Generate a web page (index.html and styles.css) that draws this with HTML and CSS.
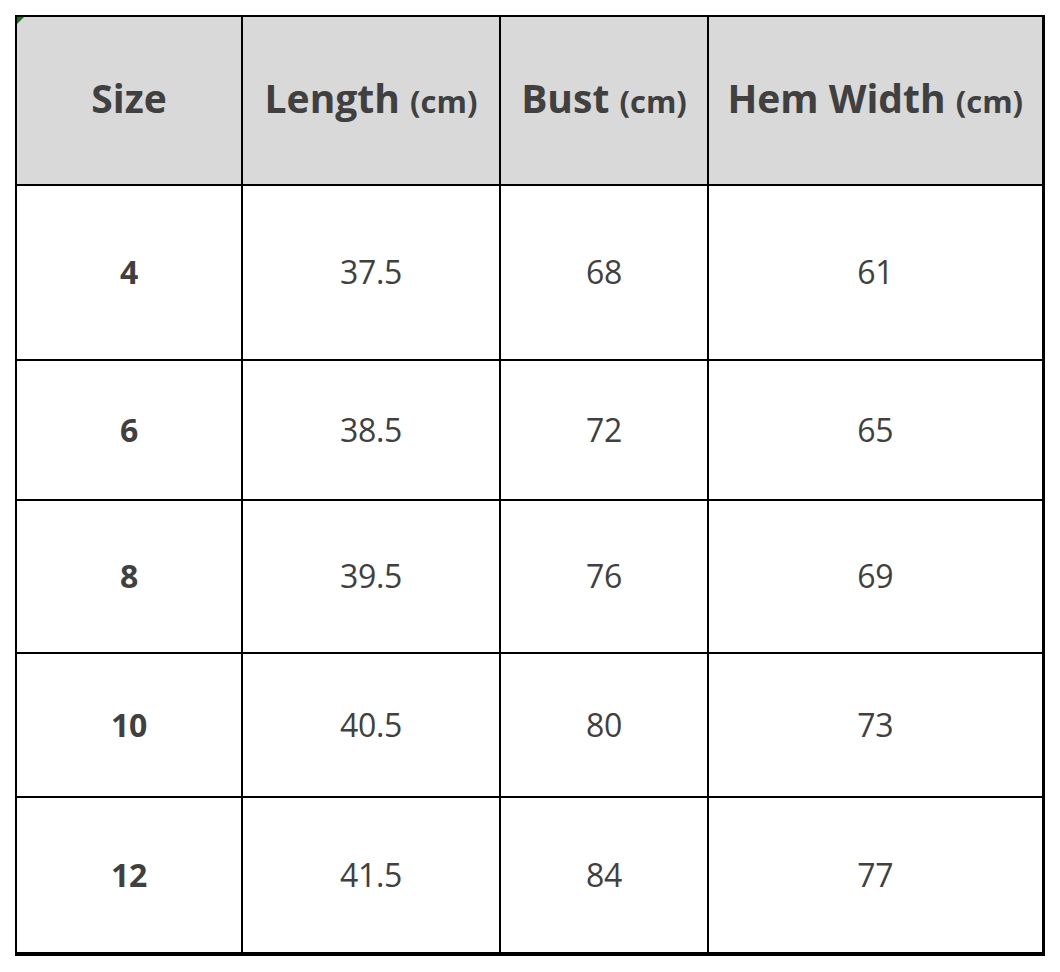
FILE: index.html
```html
<!DOCTYPE html>
<html lang="en">
<head>
<meta charset="utf-8">
<title>Size Chart</title>
<link rel="stylesheet" href="styles.css">
</head>
<body>
<div class="wrap">
  <span class="corner" aria-hidden="true"></span>
  <table class="size-table">
    <colgroup>
      <col class="c1"><col class="c2"><col class="c3"><col class="c4">
    </colgroup>
    <thead>
      <tr class="r0">
        <th>Size</th>
        <th>Length <span class="unit">(cm)</span></th>
        <th>Bust <span class="unit">(cm)</span></th>
        <th>Hem Width <span class="unit">(cm)</span></th>
      </tr>
    </thead>
    <tbody>
      <tr class="r1"><td class="sz">4</td><td>37.5</td><td>68</td><td>61</td></tr>
      <tr class="r2"><td class="sz">6</td><td>38.5</td><td>72</td><td>65</td></tr>
      <tr class="r3"><td class="sz">8</td><td>39.5</td><td>76</td><td>69</td></tr>
      <tr class="r4"><td class="sz">10</td><td>40.5</td><td>80</td><td>73</td></tr>
      <tr class="r5"><td class="sz">12</td><td>41.5</td><td>84</td><td>77</td></tr>
    </tbody>
  </table>
</div>
</body>
</html>
```

FILE: styles.css
```css
html, body {
  margin: 0;
  padding: 0;
  background: #ffffff;
}

.wrap {
  position: relative;
  margin: 15px 0 0 15px;
  width: 1027px;
}

.corner {
  position: absolute;
  left: 2px;
  top: 2px;
  width: 0;
  height: 0;
  border-top: 7px solid #0a7a0a;
  border-right: 7px solid transparent;
}

.size-table {
  border-collapse: collapse;
  table-layout: fixed;
  width: 1027px;
  font-family: "Open Sans", "Noto Sans", "Liberation Sans", sans-serif;
  color: #404040;
  border-left: 2px solid #000;
  border-top: 2px solid #000;
  border-right: 3px solid #000;
  border-bottom: 4px solid #000;
}

.c1 { width: 226px; }
.c2 { width: 258px; }
.c3 { width: 208px; }
.c4 { width: 335px; }

.size-table th,
.size-table td {
  border: 2px solid #000;
  text-align: center;
  vertical-align: middle;
  padding: 0;
  white-space: nowrap;
}

.size-table th {
  background: #d9d9d9;
  font-weight: 700;
  font-size: 39px;
  line-height: 1.2;
  padding-bottom: 4px;
}

.unit {
  font-size: 31px;
}

.size-table td {
  font-size: 32px;
  font-weight: 400;
  letter-spacing: -0.3px;
  padding-bottom: 2px;
}

.size-table td.sz {
  font-weight: 700;
}

.r0 { height: 169px; }
.r1 { height: 175px; }
.r2 { height: 140px; }
.r3 { height: 153px; }
.r4 { height: 144px; }
.r5 { height: 157px; }
```
